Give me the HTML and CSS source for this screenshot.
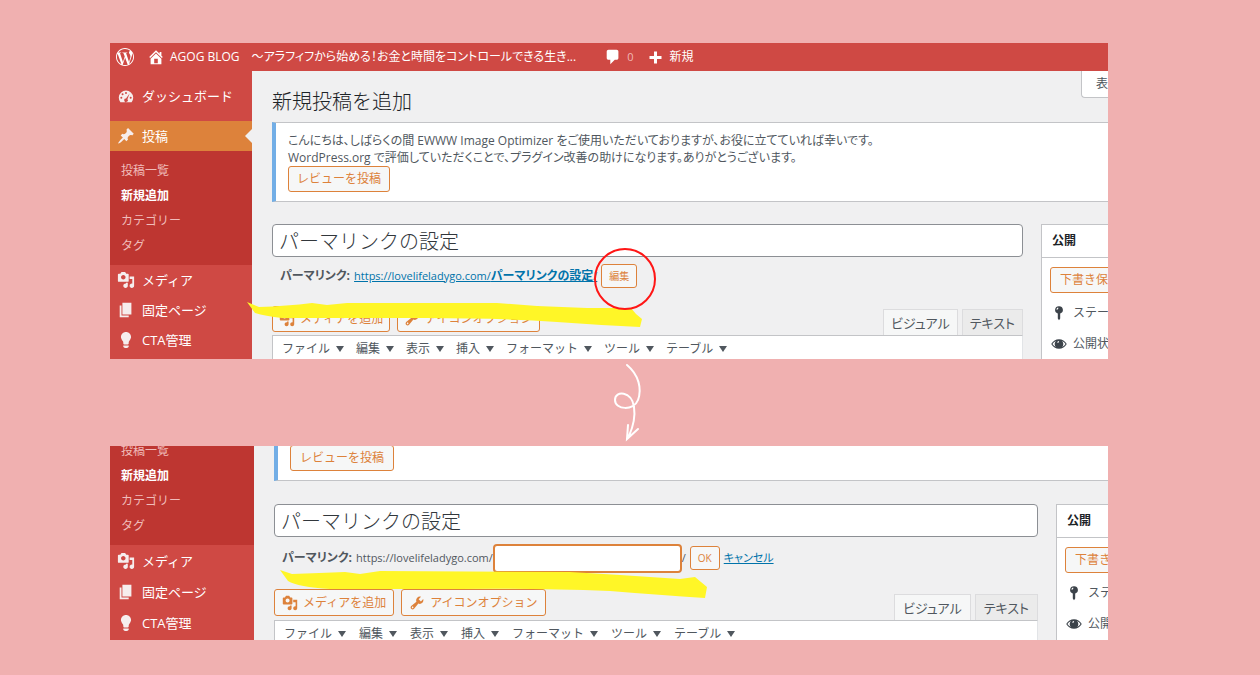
FILE: index.html
```html
<!DOCTYPE html>
<html lang="ja">
<head>
<meta charset="utf-8">
<title>パーマリンクの設定</title>
<link rel="stylesheet" href="styles.css">
</head>
<body>
<svg class="sprite" aria-hidden="true">
  <symbol id="i-wp" viewBox="0 0 24 24"><path d="M21.469 6.825c.84 1.537 1.318 3.3 1.318 5.175 0 3.979-2.156 7.456-5.363 9.325l3.295-9.527c.615-1.54.82-2.771.82-3.864 0-.405-.026-.78-.07-1.11m-7.981.105c.647-.03 1.232-.105 1.232-.105.582-.075.514-.93-.067-.899 0 0-1.755.135-2.88.135-1.064 0-2.85-.15-2.85-.15-.585-.03-.661.855-.075.885 0 0 .54.061 1.125.09l1.68 4.605-2.37 7.08L5.354 6.9c.649-.03 1.234-.1 1.234-.1.585-.075.516-.93-.065-.896 0 0-1.746.138-2.874.138-.2 0-.438-.008-.69-.015C4.911 3.15 8.235 1.215 12 1.215c2.809 0 5.365 1.072 7.286 2.833-.046-.003-.091-.009-.141-.009-1.06 0-1.812.923-1.812 1.914 0 .89.513 1.643 1.06 2.531.411.72.89 1.643.89 2.977 0 .915-.354 1.994-.821 3.479l-1.075 3.585-3.9-11.61.001.014zM12 22.784c-1.059 0-2.081-.153-3.048-.437l3.237-9.406 3.315 9.087c.024.053.05.101.078.149-1.12.393-2.325.609-3.582.609M1.211 12c0-1.564.336-3.05.935-4.39L7.29 21.709C3.694 19.96 1.212 16.271 1.211 12M12 0C5.385 0 0 5.385 0 12s5.385 12 12 12 12-5.385 12-12S18.615 0 12 0"/></symbol>
  <symbol id="i-home" viewBox="0 0 20 20"><path d="M16 8.5l1.53 1.53-1.06 1.06L10 4.6l-6.47 6.49-1.06-1.06L10 2.5l4 4v-2h2v4zm-6-2.46l6 5.99V18H4v-5.97zM12 17v-5H8v5h4z"/></symbol>
  <symbol id="i-comment" viewBox="0 0 20 20"><path d="M5 2h9c1.100 0 2 .9 2 2v7c0 1.100-.9 2-2 2h-2l-5 5v-5H5c-1.100 0-2-.9-2-2V4c0-1.100.9-2 2-2z"/></symbol>
  <symbol id="i-plus" viewBox="0 0 20 20"><path d="M8 2h4v6h6v4h-6v6H8v-6H2V8h6z"/></symbol>
  <symbol id="i-dash" viewBox="0 0 20 20"><path fill-rule="evenodd" d="M3.760 17h12.480A8 8 0 1 0 3.760 17zM10 5.500a1.100 1.100 0 1 1 0 2.200 1.100 1.100 0 0 1 0-2.200zM6.200 7a1.100 1.100 0 1 1 0 2.200 1.100 1.100 0 0 1 0-2.200zM4.800 10.900a1.100 1.100 0 1 1 0 2.200 1.100 1.100 0 0 1 0-2.200zM15.200 10.900a1.100 1.100 0 1 1 0 2.200 1.100 1.100 0 0 1 0-2.200zM14 7.200l-2.400 6.300a2 2 0 1 1-1.600-.8z"/></symbol>
  <symbol id="i-pin" viewBox="0 0 20 20"><path d="M10.440 3.020l1.820-1.820 6.360 6.350-1.830 1.820c-1.050-.68-2.480-.57-3.410.36l-.75.75c-.92.93-1.040 2.350-.35 3.410l-1.830 1.820-2.410-2.410-2.800 2.790c-.42.42-3.380 2.710-3.800 2.290s1.860-3.390 2.280-3.810l2.790-2.790L4.100 9.360l1.830-1.820c1.050.69 2.480.57 3.400-.36l.75-.75c.93-.92 1.050-2.350.36-3.410z"/></symbol>
  <symbol id="i-media" viewBox="0 0 20 20"><path d="M13 11V4c0-.55-.45-1-1-1h-1.670L9 1H5L3.670 3H2c-.55 0-1 .45-1 1v7c0 .55.45 1 1 1h10c.55 0 1-.45 1-1zM7 4.500c1.380 0 2.500 1.120 2.500 2.500S8.380 9.500 7 9.500 4.500 8.380 4.500 7 5.620 4.500 7 4.500zM14 6h5v10.500c0 1.380-1.120 2.500-2.500 2.500S14 17.880 14 16.500s1.120-2.500 2.500-2.500c.17 0 .34.02.5.05V9h-3V6zm-4 8.050V13h2v3.500c0 1.380-1.120 2.500-2.500 2.500S7 17.880 7 16.500 8.120 14 9.500 14c.17 0 .34.02.5.05z"/></symbol>
  <symbol id="i-page" viewBox="0 0 20 20"><path d="M6 15V2h10v13H6zm-1 1h8v2H3V5h2v11z"/></symbol>
  <symbol id="i-bulb" viewBox="0 0 20 20"><path d="M10 1c3.110 0 5.630 2.520 5.630 5.620 0 1.840-2.030 4.580-2.030 4.580-.33.44-.6 1.250-.6 1.800v1c0 .55-.45 1-1 1H8c-.55 0-1-.45-1-1v-1c0-.55-.27-1.360-.6-1.800 0 0-2.020-2.740-2.020-4.580C4.380 3.520 6.890 1 10 1zM7 16.870V16h6v.87c0 .62-.13 1.130-.75 1.130H12c0 .62-.4 1-1.020 1h-2c-.61 0-.98-.38-.98-1h-.25c-.62 0-.75-.51-.75-1.130z"/></symbol>
  <symbol id="i-wrench" viewBox="0 0 20 20"><path d="M16.680 9.770c-1.340 1.340-3.300 1.670-4.950.99l-5.410 6.520c-.99.99-2.590.99-3.580 0s-.99-2.590 0-3.570l6.520-5.420c-.68-1.650-.35-3.610.99-4.950 1.280-1.280 3.120-1.620 4.720-1.060l-2.890 2.890 2.820 2.820 2.860-2.870c.53 1.580.18 3.390-1.080 4.650zM3.810 16.210c.4.39 1.040.39 1.430 0 .4-.4.4-1.040 0-1.430-.39-.4-1.030-.4-1.430 0-.39.39-.39 1.030 0 1.430z"/></symbol>
  <symbol id="i-key" viewBox="0 0 20 20"><path fill-rule="evenodd" d="M10 1.500a4.700 4.700 0 0 1 1.500 9.200V17L10 19l-1.500-2v-6.300A4.700 4.700 0 0 1 10 1.500zM9 3.200c-1.500.3-2.200 1.500-2 2.800 1.100.2 2.600-1 2-2.800z"/></symbol>
  <symbol id="i-eye" viewBox="0 0 20 20"><path fill-rule="evenodd" d="M.3 10C2.500 6.300 6 4 10 4s7.500 2.300 9.700 6c-2.200 3.700-5.700 6-9.700 6S2.500 13.700.3 10zm1.500 0c1.100 1.700 2.600 3 4.400 3.900a5.500 5.500 0 0 1 0-7.800C4.400 7 2.900 8.300 1.800 10zm12-3.900a5.500 5.500 0 0 1 0 7.800c1.800-.9 3.300-2.200 4.400-3.900-1.100-1.700-2.600-3-4.400-3.900zM10 6.200c-1.300 0-2.200 1-2.100 2.200 1.200.3 2.700-.6 2.100-2.200z"/></symbol>
</svg>

<main class="page">
  <section class="shot shot-before">
    <header class="adminbar">
      <svg class="icon icon-logo"><use href="#i-wp"/></svg>
      <a class="bar-link bar-site" href="#"><svg class="icon"><use href="#i-home"/></svg><span>AGOG BLOG　〜アラフィフから始める！お金と時間をコントロールできる生き...</span></a>
      <a class="bar-link bar-comments" href="#"><svg class="icon"><use href="#i-comment"/></svg><span>0</span></a>
      <a class="bar-link bar-new" href="#"><svg class="icon icon-plus"><use href="#i-plus"/></svg><span>新規</span></a>
    </header>
    <div class="admin">
      <nav class="sidebar">
        <a class="menu menu-first" href="#"><svg class="icon"><use href="#i-dash"/></svg>ダッシュボード</a>
        <a class="menu menu-current" href="#"><svg class="icon"><use href="#i-pin"/></svg>投稿</a>
        <div class="submenu">
          <a href="#">投稿一覧</a>
          <a class="active" href="#">新規追加</a>
          <a href="#">カテゴリー</a>
          <a href="#">タグ</a>
        </div>
        <a class="menu" href="#"><svg class="icon"><use href="#i-media"/></svg>メディア</a>
        <a class="menu" href="#"><svg class="icon"><use href="#i-page"/></svg>固定ページ</a>
        <a class="menu" href="#"><svg class="icon"><use href="#i-bulb"/></svg>CTA管理</a>
      </nav>
      <div class="content">
        <div class="heading">
          <h1>新規投稿を追加</h1>
          <button class="screen-options" type="button">表</button>
        </div>
        <div class="notice">
          <p>こんにちは、しばらくの間 EWWW Image Optimizer をご使用いただいておりますが、お役に立てていれば幸いです。</p>
          <p>WordPress.org で評価していただくことで、プラグイン改善の助けになります。ありがとうございます。</p>
          <button class="btn" type="button">レビューを投稿</button>
        </div>
        <div class="columns">
          <div class="editor">
            <input class="title" type="text" aria-label="タイトル" value="パーマリンクの設定">
            <div class="permalink">
              <b>パーマリンク:</b>
              <a class="url" href="#">https://lovelifeladygo.com/<b>パーマリンクの設定</b>/</a>
              <button class="btn btn-small" type="button">編集</button>
            </div>
            <div class="tools">
              <button class="btn btn-icon" type="button"><svg class="icon"><use href="#i-media"/></svg>メディアを追加</button>
              <button class="btn btn-icon" type="button"><svg class="icon"><use href="#i-wrench"/></svg>アイコンオプション</button>
              <div class="tabs">
                <button class="tab tab-on" type="button">ビジュアル</button>
                <button class="tab" type="button">テキスト</button>
              </div>
            </div>
            <div class="menubar">
              <button type="button">ファイル<i></i></button>
              <button type="button">編集<i></i></button>
              <button type="button">表示<i></i></button>
              <button type="button">挿入<i></i></button>
              <button type="button">フォーマット<i></i></button>
              <button type="button">ツール<i></i></button>
              <button type="button">テーブル<i></i></button>
            </div>
          </div>
          <aside class="publish">
            <h2>公開</h2>
            <button class="btn" type="button">下書き保存</button>
            <p><svg class="icon"><use href="#i-key"/></svg>ステー</p>
            <p><svg class="icon"><use href="#i-eye"/></svg>公開状</p>
          </aside>
        </div>
      </div>
    </div>
    <svg class="marker" viewBox="0 0 396 28"><path d="M0 1L12 6Q40 5 65 2L80 4L100 2L250 2L290 5L340 7L370 7L384 7L389 13L395 18L393 26Q350 24 310 21Q250 17 180 17L35 17Q18 15 8 12Z"/></svg>
    <svg class="ring" viewBox="0 0 62 62"><circle cx="31" cy="31" r="30"/></svg>
  </section>

  <svg class="arrow" viewBox="0 0 32 80"><path d="M15 3C27 13 30 27 26 38C22 49 3 48 3 38C3 28 20 29 22 45Q24 58 17 74M16 63L15 77L26 67"/></svg>

  <section class="shot shot-after">
    <div class="admin">
      <nav class="sidebar">
        <div class="submenu">
          <a href="#">投稿一覧</a>
          <a class="active" href="#">新規追加</a>
          <a href="#">カテゴリー</a>
          <a href="#">タグ</a>
        </div>
        <a class="menu" href="#"><svg class="icon"><use href="#i-media"/></svg>メディア</a>
        <a class="menu" href="#"><svg class="icon"><use href="#i-page"/></svg>固定ページ</a>
        <a class="menu" href="#"><svg class="icon"><use href="#i-bulb"/></svg>CTA管理</a>
      </nav>
      <div class="content">
        <div class="notice">
          <button class="btn" type="button">レビューを投稿</button>
        </div>
        <div class="columns">
          <div class="editor">
            <input class="title" type="text" aria-label="タイトル" value="パーマリンクの設定">
            <div class="permalink">
              <b>パーマリンク:</b>
              <span class="url slug-row">https://lovelifeladygo.com/<input class="slug" type="text" aria-label="スラッグ">/</span>
              <button class="btn btn-small" type="button">OK</button>
              <a class="cancel" href="#">キャンセル</a>
            </div>
            <div class="tools">
              <button class="btn btn-icon" type="button"><svg class="icon"><use href="#i-media"/></svg>メディアを追加</button>
              <button class="btn btn-icon" type="button"><svg class="icon"><use href="#i-wrench"/></svg>アイコンオプション</button>
              <div class="tabs">
                <button class="tab tab-on" type="button">ビジュアル</button>
                <button class="tab" type="button">テキスト</button>
              </div>
            </div>
            <div class="menubar">
              <button type="button">ファイル<i></i></button>
              <button type="button">編集<i></i></button>
              <button type="button">表示<i></i></button>
              <button type="button">挿入<i></i></button>
              <button type="button">フォーマット<i></i></button>
              <button type="button">ツール<i></i></button>
              <button type="button">テーブル<i></i></button>
            </div>
          </div>
          <aside class="publish">
            <h2>公開</h2>
            <button class="btn" type="button">下書き</button>
            <p><svg class="icon"><use href="#i-key"/></svg>ステ</p>
            <p><svg class="icon"><use href="#i-eye"/></svg>公開</p>
          </aside>
        </div>
      </div>
    </div>
    <svg class="marker" viewBox="0 0 428 30"><path d="M0 1L12 5Q40 4 65 3L80 5L100 2L290 3L340 6L400 10L415 8L421 13L427 18L425 29Q380 26 330 22Q250 19 180 20L50 20Q18 18 8 12Z"/></svg>
  </section>
</main>
</body>
</html>
```
FILE: styles.css
```css
* { box-sizing: border-box; }

body {
  margin: 0;
  min-height: 100vh;
  background: #f0b0b0;
  color: #50575e;
  font: 12px/18px "Open Sans", "Noto Sans CJK JP", sans-serif;
}

button, input { font: inherit; color: inherit; margin: 0; }
h1, h2, p { margin: 0; font-weight: 400; }
a { color: #0073aa; }
.sprite { position: absolute; width: 0; height: 0; }
.icon { width: 16px; height: 16px; fill: currentColor; flex: none; }

/* Proportional kana for running text */
.adminbar, .notice p, .permalink, .tab { font-feature-settings: "palt"; }

.page { padding: 43px 152px 34px 110px; }
.shot { position: relative; overflow: hidden; background: #f0f0f1; white-space: nowrap; }
.shot-before { height: 316px; }
.shot-after { height: 194px; }
.admin { display: flex; min-height: 100%; }

/* Admin bar */
.adminbar { display: flex; align-items: center; height: 28px; padding-left: 6px; background: #cf4944; color: #fff; }
.adminbar .icon { width: 18px; height: 18px; }
.adminbar .icon-logo { margin-right: 13px; }
.bar-link { display: flex; align-items: center; gap: 5px; color: #fff; text-decoration: none; }
.bar-comments { margin-left: 28px; }
.bar-comments span { color: #f1b6b4; font-size: 11px; }
.bar-new { margin-left: 15px; gap: 6px; }
.adminbar .icon-plus { width: 15px; height: 15px; }

/* Sidebar */
.sidebar { width: 142px; flex: none; background: #cf4944; }
.menu { position: relative; display: flex; align-items: center; gap: 7px; height: 30px; padding-left: 7px; color: #fff; font-size: 13px; text-decoration: none; }
.menu .icon { width: 18px; height: 18px; color: #f6eded; }
.menu-first { margin: 10px 0; }
.menu-current { background: #dd823b; }
.menu-current::after { content: ""; position: absolute; right: 0; top: 8px; border: 7px solid transparent; border-left: 0; border-right-color: #f0f0f1; }
.submenu { padding: 7px 0; background: #be3631; }
.submenu a { display: block; padding-left: 11px; color: #f0bcba; line-height: 25px; text-decoration: none; }
.submenu .active { color: #fff; font-weight: 700; }

/* Content */
.content { flex: 1; min-width: 0; padding-left: 20px; }
.heading { display: flex; justify-content: space-between; align-items: flex-start; height: 51px; }
.heading h1 { padding-top: 17px; color: #1d2327; font-size: 20px; line-height: 28px; font-weight: 300; }
.screen-options { width: 27px; height: 27px; padding: 0 0 0 14px; overflow: hidden; border: 1px solid #c3c4c7; border-width: 0 0 1px 1px; border-radius: 0 0 0 4px; background: #fff; text-align: left; }
.notice { padding: 9px 0 9px 12px; border: 1px solid #c3c4c7; border-left: 4px solid #72aee6; border-right: 0; background: #fff; }
.notice p { line-height: 17px; }
.btn { height: 26px; padding: 0 8px; border: 1px solid #dd823b; border-radius: 3px; background: #f6f7f7; color: #dd823b; white-space: nowrap; }
.notice .btn { display: block; }
.columns { display: grid; grid-template-columns: minmax(0, 1fr) 67px; gap: 18px; padding-top: 22px; }
.title { display: block; width: 100%; height: 33px; padding: 0 6px; border: 1px solid #8c8f94; border-radius: 4px; background: #fff; color: #32373c; font-size: 20px; font-weight: 300; }
.permalink { display: flex; align-items: center; gap: 4px; height: 37px; padding-left: 8px; }
.url { font-size: 11px; }
.url b { font-size: 12px; }
.permalink .btn-small { height: 24px; padding: 0 7px; font-size: 10px; }
.tools { display: flex; align-items: center; gap: 7px; height: 41px; padding-top: 8px; }
.btn-icon { display: flex; align-items: center; gap: 5px; padding: 0 6px; }
.tabs { display: flex; align-self: flex-end; gap: 4px; margin-left: auto; }
.tab { height: 26px; padding: 0 7px; border: 1px solid #dcdcde; border-bottom: 0; background: #ebebeb; font-size: 13px; }
.tab-on { background: #f6f7f7; }
.menubar { display: flex; gap: 12px; padding: 4px 9px; border: 1px solid #c3c4c7; border-right-color: #e2e4e7; border-bottom: 0; background: #fff; }
.menubar button { display: flex; align-items: center; gap: 6px; padding: 0; border: 0; background: none; }
.menubar i { border: 4px solid transparent; border-top: 6px solid #50575e; border-bottom: 0; }

/* Publish box */
.publish { overflow: hidden; border: 1px solid #c3c4c7; border-width: 1px 0 0 1px; background: #fff; }
.publish h2 { height: 33px; padding-left: 10px; border-bottom: 1px solid #c3c4c7; color: #1d2327; font-size: 12px; line-height: 32px; font-weight: 700; }
.publish .btn { display: block; margin: 9px 0 4px 8px; padding: 0 9px; }
.publish p { display: flex; align-items: center; gap: 6px; height: 31px; padding-left: 9px; }
.publish .icon { color: #3c434a; }

/* Scrolled view */
.shot-after .sidebar { width: 144px; }
.shot-after .submenu { margin-top: -16px; padding: 8px 0 7px; }
.shot-after .menu { height: 31px; }
.shot-after .notice { margin-top: -11px; }
.shot-after .notice .btn { padding: 0 9px; }
.shot-after .columns { grid-template-columns: minmax(0, 1fr) 52px; padding-top: 23px; }
.shot-after .permalink { height: 42px; }
.shot-after .tools { padding-top: 6px; }
.shot-after .btn-icon { height: 27px; padding: 0 7px; }
.shot-after .tab { padding: 0 8px; }
.shot-after .menubar { gap: 13px; }
.slug-row { display: flex; align-items: center; }
.slug { width: 189px; height: 29px; border: 2px solid #dd823b; border-radius: 4px; background: #fff; }
.cancel { font-size: 11px; }

/* Annotations drawn over the screens */
.marker { position: absolute; fill: #fff627; }
.shot-before .marker { left: 137px; top: 258px; width: 396px; height: 28px; }
.shot-after .marker { left: 170px; top: 123px; width: 428px; height: 30px; }
.ring { position: absolute; left: 484px; top: 205px; width: 62px; height: 62px; fill: none; stroke: #ff1616; stroke-width: 2px; }
.arrow { display: block; width: 32px; height: 80px; margin: 3px 0 4px 502px; fill: none; stroke: #fff; stroke-width: 2px; stroke-linecap: round; }
```
